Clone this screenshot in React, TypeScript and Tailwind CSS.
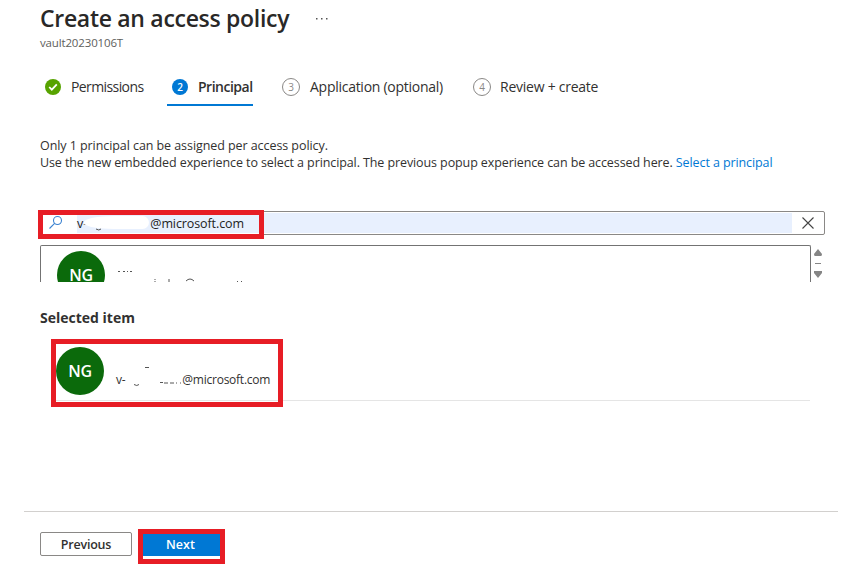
import React from "react";

function Fragments({ d, className, box }: { d: string; className: string; box: string }) {
  return (
    <svg viewBox={box} className={className} fill="none" stroke="#555" strokeWidth="1">
      <path d={d} />
    </svg>
  );
}

function StepNumber({ n }: { n: number }) {
  return (
    <span className="flex size-[18px] shrink-0 items-center justify-center rounded-full border border-[#8a8886] text-[10px] leading-none text-[#8a8886]">
      {n}
    </span>
  );
}

function Avatar() {
  return (
    <div className="flex size-12 shrink-0 items-center justify-center rounded-full bg-[#0b6a0b] pb-px text-[16px] font-semibold tracking-[-0.2px] text-white">
      NG
    </div>
  );
}

export default function App() {
  return (
    <main className="h-[571px] w-[862px] overflow-hidden bg-white font-['Open_Sans','Noto_Sans',sans-serif] text-[13px] text-[#323130]">
      <header className="h-[52px] pl-10">
        <div className="flex h-[36px] items-center">
          <h1 className="w-[276px] whitespace-nowrap text-[23px] leading-[36px] font-semibold tracking-[-0.3px] text-[#292827]">Create an access policy</h1>
          <svg className="h-3 w-[13px]" viewBox="0 0 13 12" fill="#555"><path d="M0 6h1.5v1.5H0zM5 6h1.5v1.5H5zM10 6h1.5v1.5H10z" /></svg>
        </div>
        <p className="h-4 text-[11.5px] leading-[14px] tracking-[-0.15px] text-[#605e5c]">vault20230106T</p>
      </header>

      <nav className="mt-[18px] flex h-9 items-start pl-[45px] text-[14px] leading-[34px] whitespace-nowrap">
        <div className="flex h-[34px] w-[122px] items-center gap-[10px]">
          <svg className="size-4" viewBox="0 0 16 16"><circle cx="8" cy="8" r="8" fill="#57a300" /><path d="m4.2 8 2.6 2.7 5-5.3" fill="none" stroke="white" strokeWidth="1.8" /></svg>
          <span className="tracking-[-0.6px]">Permissions</span>
        </div>
        <div className="flex h-9 w-[86px] items-center gap-[10px] border-b-2 border-[#0078d4] pl-[5px]">
          <span className="flex size-4 shrink-0 items-center justify-center rounded-full bg-[#0078d4] text-[10px] leading-none font-semibold text-white">2</span>
          <span className="font-semibold tracking-[-0.5px]">Principal</span>
        </div>
        <div className="ml-[29px] flex h-[34px] w-[191px] items-center gap-[10px]">
          <StepNumber n={3} />
          <span className="tracking-[-0.27px]">Application (optional)</span>
        </div>
        <div className="flex h-[34px] items-center gap-[9px]">
          <StepNumber n={4} />
          <span className="tracking-[-0.25px]">Review + create</span>
        </div>
      </nav>

      <section className="mt-[31px] h-[68px] pl-10 text-[12.5px] leading-[17px] whitespace-nowrap">
        <p className="tracking-[-0.07px]">Only 1 principal can be assigned per access policy.</p>
        <p className="tracking-[-0.1px]">Use the new embedded experience to select a principal. The previous popup experience can be accessed here. <a className="text-[#0078d4]">Select a principal</a></p>
      </section>

      <section className="relative mt-[6px] ml-10 h-6 w-[785px]">
        <div className="flex h-6 rounded-[2px] border border-[#8a8886] py-px">
          <div className="flex w-[36px] items-center justify-center pr-[8px] pb-px">
            <svg className="size-[15px]" viewBox="0 0 15 15" fill="none" stroke="#3b82d0" strokeWidth="1.1"><circle cx="9.5" cy="5.5" r="4" /><path d="M6.6 8.4 1.5 13.5" /></svg>
          </div>
          <div className="flex h-5 w-[715px] items-center bg-[#e8f0fe] text-[12.5px] leading-[20px] text-[#222]">
            <span className="pt-[2px]">v</span><span className="pt-[2px] text-[#777]">-</span>
            <span className="relative h-5 w-[63px]">
              <span className="absolute top-[3px] left-[-3px] h-[13px] w-[65px] rounded-[50%_7px_7px_50%] bg-white" />
              <Fragments box="0 0 63 20" className="absolute inset-0 h-5 w-[63px]" d="M9 16q3 2 5 0" />
            </span>
            <span className="pt-[2px] tracking-[-0.1px]">@microsoft.com</span>
          </div>
          <div className="flex flex-1 items-center justify-center">
            <svg className="size-3" viewBox="0 0 12 12" stroke="#444" strokeWidth="1.1"><path d="m.5.5 11 11m0-11-11 11" /></svg>
          </div>
        </div>
        <div className="absolute top-[-1px] left-[-2px] h-[29px] w-[226px] border-[5px] border-[#e71d25]" />
      </section>

      <section className="mt-[10px] ml-10 flex h-[37px]">
        <div className="flex h-[37px] w-[771px] overflow-hidden rounded-t-[2px] border-x border-t border-[#737373] pt-[5px] pl-4">
          <Avatar />
          <Fragments box="0 0 136 32" className="ml-3 h-8 w-[136px]" d="M1 20.5h2m3 0h2m2 0h1m2 0h2M38 28v1m0 1v1m14-3v3M69 30q4-4 8 0M120 30.500h1m3 0h1" />
        </div>
        <svg className="ml-[3px] h-[37px] w-2" viewBox="0 0 8 37" fill="#858585"><path d="M4 4 8 9q0 2-1 2H1Q0 11 0 9ZM1 18h6v1H1ZM0 26h8v2l-4 5-4-5Z" /></svg>
      </section>

      <h2 className="mt-[26px] ml-10 h-5 text-[14px] leading-[20px] font-bold tracking-[0px]">Selected item</h2>

      <section className="relative mt-[19px] ml-14 flex h-[54px] w-[754px] border-b border-[#e5e5e5]">
        <Avatar />
        <div className="mt-[24px] ml-3 flex h-[18px] items-center text-[12px] leading-[18px] tracking-[-0.25px]">
          <span>v-</span>
          <Fragments box="0 0 57 20" className="h-5 w-[57px] overflow-visible" d="M9 14.500q3 2 5 0M20-2.500h4M35 12.500h3m1 .5h4m2 0h4m2 0h1m3 0h1" />
          <span>@microsoft.com</span>
        </div>
        <div className="absolute top-[-8px] left-[-5px] h-[68px] w-[232px] border-[5px] border-[#e71d25]" />
      </section>

      <footer className="mt-[110px] mr-6 ml-6 flex h-[60px] items-start border-t border-[#d2d0ce] pt-[17px] pl-4 text-[12.5px] font-semibold">
        <button className="mt-[3px] h-6 w-[92px] rounded-[2px] border border-[#8a8886] pt-px leading-[21px] tracking-[-0.2px]">Previous</button>
        <div className="ml-[6px] h-[35px] w-[87px] border-[5px] border-[#e71d25]">
          <button className="block h-[22px] w-[77px] bg-[#0078d4] pr-[2px] leading-[20px] text-white">Next</button>
        </div>
      </footer>
    </main>
  );
}
